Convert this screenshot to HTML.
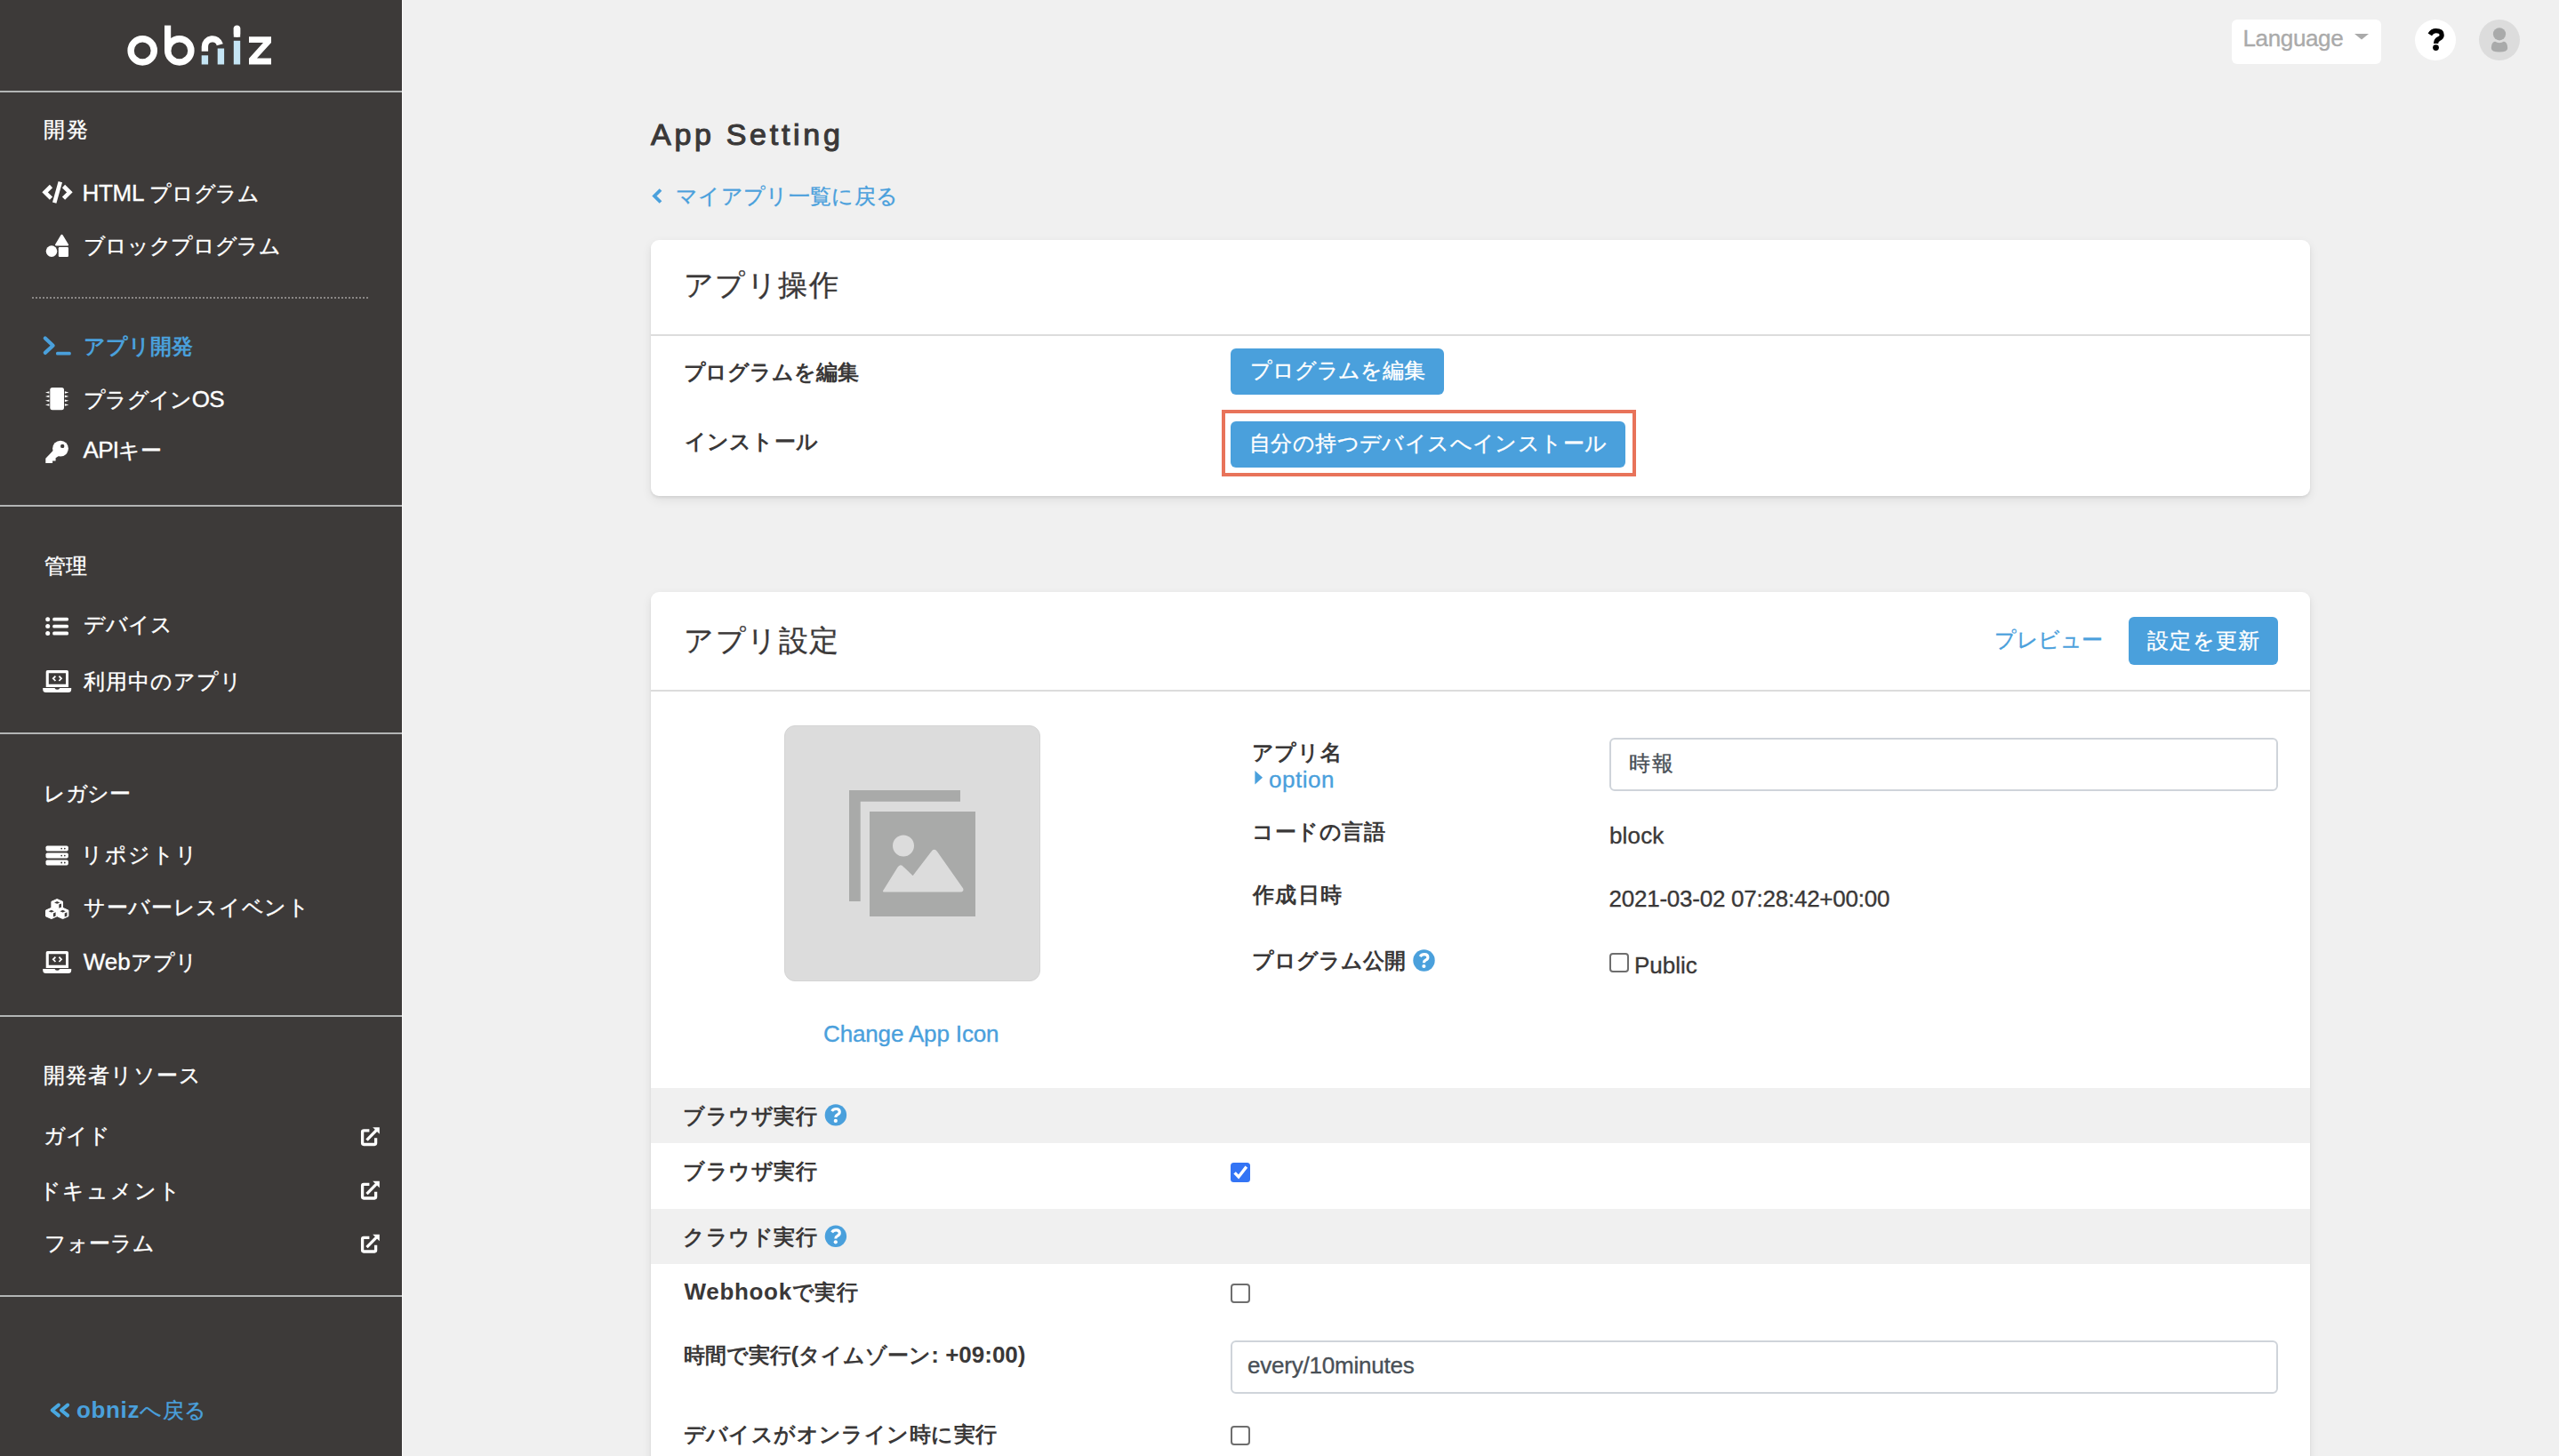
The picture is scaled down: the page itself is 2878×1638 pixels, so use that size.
<!DOCTYPE html>
<html lang="ja">
<head>
<meta charset="utf-8">
<style>
html,body{margin:0;padding:0;}
body{width:2878px;height:1638px;overflow:hidden;background:#f0f0f0;position:relative;font-family:"Liberation Sans",sans-serif;color:#3a3838;}
.a{position:absolute;}
.t{position:absolute;white-space:nowrap;height:40px;line-height:40px;font-size:26px;-webkit-text-stroke:0.35px currentColor;}
.t.b{-webkit-text-stroke:0;}
#sb{position:absolute;left:0;top:0;width:452px;height:1638px;background:#3d3a39;}
#sbedge{position:absolute;left:452px;top:0;width:1px;height:1638px;background:#fafafa;}
.hl{position:absolute;left:0;width:452px;height:2px;background:#b3b5b5;}
.sw{color:#fff;}
.blue{color:#4aa0dc;}
.b{font-weight:bold;}
.card{position:absolute;background:#fff;border-radius:9px;box-shadow:0 2px 3px rgba(0,0,0,0.07),0 4px 12px rgba(0,0,0,0.08);}
.div{position:absolute;left:0;right:0;height:2px;background:#dcdcdc;}
.btn{position:absolute;background:#4aa0dc;border-radius:6px;color:#fff;font-size:26px;text-align:center;white-space:nowrap;}
.help{position:absolute;width:24px;height:24px;border-radius:50%;background:#4aa0dc;color:#fff;font-weight:bold;font-size:19px;line-height:24px;text-align:center;}
.cb{position:absolute;width:18px;height:18px;border:2px solid #6e6e6e;border-radius:4px;background:#fff;}
.inp{position:absolute;background:#fff;border:2px solid #cfd4da;border-radius:6px;box-sizing:border-box;}
.j{font-size:24px;}
.gray{position:absolute;left:0;right:0;background:#f0f0f0;}
</style>
</head>
<body>
<div id="sb">
  <!-- logo -->
  <svg class="a" style="left:0;top:0" width="452" height="100" viewBox="0 0 452 100">
    <circle cx="160.2" cy="56.9" r="13.1" fill="none" stroke="#fff" stroke-width="7.4"/>
    <rect x="185" y="28.6" width="7.2" height="28.3" fill="#fff"/>
    <circle cx="201.8" cy="56.9" r="13.1" fill="none" stroke="#fff" stroke-width="7.4"/>
    <path d="M230.4 57.7 V52.4 A8.6 8.6 0 0 1 247.3 50.2" fill="none" stroke="#fff" stroke-width="7.4"/>
    <rect x="226.7" y="62.3" width="7.4" height="10.2" fill="#c5e5f5"/>
    <rect x="244.7" y="54.5" width="7.4" height="18" fill="#c5e5f5"/>
    <rect x="262.8" y="28.6" width="7.4" height="13.1" rx="3.7" fill="#fff"/>
    <rect x="262.8" y="31" width="7.4" height="10.7" fill="#fff"/>
    <rect x="262.8" y="45.8" width="7.4" height="26.7" fill="#c5e5f5"/>
    <path d="M280 41.3 H305 V48 L289 65.5 H305 V72.5 H280 V65.8 L296 48 H280 Z" fill="#fff"/>
  </svg>
</div>
<div id="sbedge"></div>
<div class="hl" style="top:102px"></div>
<div class="hl" style="top:568px"></div>
<div class="hl" style="top:824px"></div>
<div class="hl" style="top:1142px"></div>
<div class="hl" style="top:1457px"></div>
<div class="a" style="left:36px;top:334px;width:378px;height:0;border-top:2px dotted #8a8786;"></div>


<!-- sidebar icons -->
<svg class="a" style="left:0;top:0" width="452" height="1638" viewBox="0 0 452 1638">
  <g fill="none" stroke="#fff" stroke-width="4.6" stroke-linejoin="miter">
    <path d="M57.5 209.5 L50.6 216.3 L57.5 223.1"/>
    <path d="M71.5 209.5 L78.4 216.3 L71.5 223.1"/>
  </g>
  <path d="M65.6 204 L70 205.2 L63.4 228.8 L59 227.6 Z" fill="#fff"/>
  <path d="M69.5 263.8 Q70.2 263.8 70.8 264.8 L77 275 Q77.6 276.4 76 276.4 L63 276.4 Q61.5 276.4 62.1 275 L68.2 264.8 Q68.8 263.8 69.5 263.8 Z" fill="#fff"/>
  <circle cx="58" cy="282.6" r="6.3" fill="#fff"/>
  <rect x="65.8" y="278" width="11.2" height="11" rx="1.2" fill="#fff"/>
  <g fill="none" stroke="#4aa0dc" stroke-width="4.2" stroke-linecap="round" stroke-linejoin="round">
    <path d="M50.8 380.5 L59.6 388.7 L50.8 396.9"/>
  </g>
  <rect x="63" y="395.8" width="16.8" height="3.8" rx="1.5" fill="#4aa0dc"/>
  <rect x="56.3" y="436" width="15.7" height="25.2" rx="2.6" fill="#fff"/>
  <g fill="#fff">
    <path d="M55.4 440.2 V442.8 L51 441.5 Z"/><path d="M55.4 444.6 V447.2 L51 445.9 Z"/><path d="M55.4 449.5 V452.1 L51 450.8 Z"/><path d="M55.4 454.2 V456.8 L51 455.5 Z"/>
    <path d="M72.9 440.2 V442.8 L77.3 441.5 Z"/><path d="M72.9 444.6 V447.2 L77.3 445.9 Z"/><path d="M72.9 449.5 V452.1 L77.3 450.8 Z"/><path d="M72.9 454.2 V456.8 L77.3 455.5 Z"/>
  </g>
  <circle cx="68" cy="504.6" r="8.9" fill="#fff"/><path d="M59.6 507.1 L51.3 515.7 V521 H59.1 V518.4 H62.6 V515.3 L67.5 512 L64 509 Z" fill="#fff"/>
  <circle cx="70.2" cy="501.9" r="2.2" fill="#3d3a39"/>
  <g fill="#fff">
    <circle cx="53.7" cy="696.7" r="2.5"/><circle cx="53.7" cy="704.6" r="2.5"/><circle cx="53.7" cy="712.5" r="2.5"/>
    <rect x="59.2" y="694.8" width="17.8" height="3.8" rx="1.5"/><rect x="59.2" y="702.7" width="17.8" height="3.8" rx="1.5"/><rect x="59.2" y="710.6" width="17.8" height="3.8" rx="1.5"/>
  </g>
  <g id="laptop">
    <path d="M53.5 754 H75.2 Q77 754 77 755.8 V772.9 H51.7 V755.8 Q51.7 754 53.5 754 Z M54.8 757.2 V769.8 H74 V757.2 Z" fill="#fff" fill-rule="evenodd"/>
    <path d="M48.2 773.9 H61.5 Q62.5 775.8 64.4 775.8 Q66.3 775.8 67.3 773.9 H80.2 V775.5 Q80.2 779 76.7 779 H51.7 Q48.2 779 48.2 775.5 Z" fill="#fff"/>
    <path d="M62.4 760.6 L59.8 763.3 L62.4 766 M66.4 760.6 L69 763.3 L66.4 766" fill="none" stroke="#fff" stroke-width="1.8"/>
  </g>
  <use href="#laptop" x="0" y="316"/>
  <g fill="#fff">
    <rect x="51.5" y="951.5" width="25.3" height="6.1" rx="1.8"/>
    <rect x="51.5" y="959.5" width="25.3" height="6.1" rx="1.8"/>
    <rect x="51.5" y="967.4" width="25.3" height="6.1" rx="1.8"/>
  </g>
  <g fill="#3d3a39">
    <circle cx="69.2" cy="954.6" r="0.9"/><circle cx="72.8" cy="954.6" r="0.9"/>
    <circle cx="69.2" cy="962.6" r="0.9"/><circle cx="72.8" cy="962.6" r="0.9"/>
    <circle cx="69.2" cy="970.5" r="0.9"/><circle cx="72.8" cy="970.5" r="0.9"/>
  </g>
  <g fill="#fff" stroke="#fff" stroke-width="1" stroke-linejoin="round">
    <path d="M64.2 1011.5 L70.5 1014.3 V1021 L64.2 1023.8 L57.9 1021 V1014.3 Z"/>
    <path d="M57.8 1021.3 L64.1 1024.1 V1030.8 L57.8 1033.6 L51.5 1030.8 V1024.1 Z"/>
    <path d="M70.6 1021.3 L76.9 1024.1 V1030.8 L70.6 1033.6 L64.3 1030.8 V1024.1 Z"/>
  </g>
  <g fill="#3d3a39">
    <path d="M61 1015.4 L64.2 1014 L67.4 1015.4 L64.2 1016.8 Z"/>
    <path d="M54.6 1025.2 L57.8 1023.8 L61 1025.2 L57.8 1026.6 Z"/>
    <path d="M67.4 1025.2 L70.6 1023.8 L73.8 1025.2 L70.6 1026.6 Z"/>
    <path d="M66.3 1017.6 L69 1016.4 V1020.6 L66.3 1021.8 Z"/>
    <path d="M59.9 1027.4 L62.6 1026.2 V1030.4 L59.9 1031.6 Z"/>
    <path d="M72.7 1027.4 L75.4 1026.2 V1030.4 L72.7 1031.6 Z"/>
  </g>
  <g id="ext" fill="none" stroke="#fff" stroke-width="3.3">
    <path d="M415.4 1271.9 H409 Q407.6 1271.9 407.6 1273.3 V1286.1 Q407.6 1287.5 409 1287.5 H421.3 Q422.6 1287.5 422.6 1286.1 V1280.2"/>
    <path d="M412.5 1282.6 L423.5 1271.4"/>
  </g>
  <path d="M419.2 1268.2 H426.8 V1275.8 Z" fill="#fff"/>
  <use href="#ext" x="0" y="60.5"/>
  <path d="M419.2 1328.7 H426.8 V1336.3 Z" fill="#fff"/>
  <use href="#ext" x="0" y="120.5"/>
  <path d="M419.2 1388.7 H426.8 V1396.3 Z" fill="#fff"/>
  <g fill="none" stroke="#4aa8e0" stroke-width="4" stroke-linecap="round" stroke-linejoin="round">
    <path d="M65.9 1580.6 L58.7 1586.5 L65.9 1592.4"/>
    <path d="M76.1 1580.6 L68.9 1586.5 L76.1 1592.4"/>
  </g>
</svg>

<!-- sidebar texts -->
<div id="t1" class="t sw" style="font-size:24px;left:49.0px;top:126.0px;letter-spacing:2.00px;">開発</div>
<div id="t2" class="t sw" style="left:92.4px;top:196.5px;letter-spacing:-0.27px;">HTML <span class="j">プログラム</span></div>
<div id="t3" class="t sw" style="font-size:24px;left:93.5px;top:257.1px;letter-spacing:-0.31px;">ブロックプログラム</div>
<div id="t4" class="t blue b" style="font-size:24px;left:94.0px;top:369.5px;letter-spacing:0.00px;">アプリ開発</div>
<div id="t5" class="t sw" style="left:94.0px;top:428.5px;letter-spacing:-0.67px;"><span class="j">プラグイン</span>OS</div>
<div id="t6" class="t sw" style="left:93.6px;top:486.4px;letter-spacing:-0.75px;">API<span class="j">キー</span></div>
<div id="t7" class="t sw" style="font-size:24px;left:50.0px;top:616.5px;letter-spacing:0.00px;">管理</div>
<div id="t8" class="t sw" style="font-size:24px;left:94.0px;top:682.8px;letter-spacing:0.01px;">デバイス</div>
<div id="t9" class="t sw" style="font-size:24px;left:94.0px;top:747.0px;letter-spacing:1.01px;">利用中のアプリ</div>
<div id="t10" class="t sw" style="font-size:24px;left:49.0px;top:872.5px;letter-spacing:-0.33px;">レガシー</div>
<div id="t11" class="t sw" style="font-size:24px;left:91.0px;top:942.0px;letter-spacing:1.50px;">リポジトリ</div>
<div id="t12" class="t sw" style="font-size:24px;left:94.0px;top:1000.5px;letter-spacing:0.67px;">サーバーレスイベント</div>
<div id="t13" class="t sw" style="left:93.8px;top:1062.0px;letter-spacing:0.00px;">Web<span class="j">アプリ</span></div>
<div id="t14" class="t sw" style="font-size:24px;left:48.5px;top:1190.0px;letter-spacing:1.01px;">開発者リソース</div>
<div id="t15" class="t sw" style="font-size:24px;left:49.0px;top:1257.5px;letter-spacing:0.00px;">ガイド</div>
<div id="t16" class="t sw" style="font-size:24px;left:43.5px;top:1319.5px;letter-spacing:1.90px;">ドキュメント</div>
<div id="t17" class="t sw" style="font-size:24px;left:49.5px;top:1379.0px;letter-spacing:-0.00px;">フォーラム</div>
<div id="t18" class="t blue" style="left:86.0px;top:1566.0px;letter-spacing:0.65px;"><b style="-webkit-text-stroke:0">obniz</b><span class="j">へ戻る</span></div>

<!-- header -->
<div class="a" style="left:2510px;top:22px;width:168px;height:50px;background:#fff;border-radius:6px;"></div>
<div id="t19" class="t" style="left:2522.5px;top:22.5px;color:#aaa;letter-spacing:-0.36px;">Language</div>

<!-- title -->
<div id="t46" class="t" style="-webkit-text-stroke:1.1px currentColor;left:732.0px;top:126.0px;font-size:34px;height:50px;line-height:50px;letter-spacing:3.70px;">App Setting</div>
<div id="t20" class="t blue" style="font-size:24px;left:760.0px;top:201.0px;letter-spacing:0.33px;">マイアプリ一覧に戻る</div>

<!-- card 1 -->
<div class="card" style="left:732px;top:270px;width:1866px;height:288px;">
  <div class="div" style="top:106px"></div>
</div>
<div id="t21" class="t" style="left:769.0px;top:295.5px;font-size:33px;height:50px;line-height:50px;letter-spacing:1.38px;">アプリ操作</div>
<div id="t22" class="t b" style="font-size:24px;left:768.5px;top:398.5px;letter-spacing:-0.07px;">プログラムを編集</div>
<div class="btn" style="left:1384px;top:392px;width:240px;height:52px;"></div>
<div id="t23" class="t sw" style="font-size:24px;left:1406.0px;top:397.1px;letter-spacing:-0.14px;">プログラムを編集</div>
<div id="t24" class="t b" style="font-size:24px;left:769.5px;top:477.0px;letter-spacing:0.30px;">インストール</div>
<div class="a" style="left:1374px;top:461px;width:458px;height:67px;border:4.5px solid #e8735a;"></div>
<div class="btn" style="left:1384px;top:474px;width:444px;height:52px;"></div>
<div id="t25" class="t sw" style="font-size:24px;left:1405.0px;top:479.1px;letter-spacing:0.40px;">自分の持つデバイスへインストール</div>

<!-- card 2 -->
<div class="card" style="left:732px;top:666px;width:1866px;height:1100px;">
  <div class="div" style="top:110px"></div>
  <div class="gray" style="top:558px;height:62px"></div>
  <div class="gray" style="top:694px;height:62px"></div>
</div>
<div id="t26" class="t" style="left:769.0px;top:696.0px;font-size:33px;height:50px;line-height:50px;letter-spacing:1.50px;">アプリ設定</div>
<div id="t27" class="t blue" style="font-size:24px;left:2243.0px;top:700.0px;letter-spacing:-0.50px;">プレビュー</div>
<div class="btn" style="left:2394px;top:694px;width:168px;height:54px;"></div>
<div id="t28" class="t sw" style="font-size:24px;left:2415.0px;top:700.5px;letter-spacing:1.25px;">設定を更新</div>

<div class="a" style="left:882px;top:816px;width:286px;height:286px;background:#dcdcdc;border:1px solid #d4d4d4;border-radius:12px;"></div>
<div id="t29" class="t blue" style="left:926.0px;top:1143.0px;letter-spacing:-0.14px;">Change App Icon</div>

<div id="t30" class="t b" style="font-size:24px;left:1407.6px;top:834.0px;height:26px;line-height:26px;letter-spacing:0.86px;">アプリ名</div>
<div id="t31" class="t blue" style="left:1427.0px;top:863.5px;height:26px;line-height:26px;letter-spacing:0.50px;">option</div>
<div id="t32" class="t b" style="font-size:24px;left:1408.0px;top:915.5px;letter-spacing:0.60px;">コードの言語</div>
<div id="t33" class="t b" style="font-size:24px;left:1409.0px;top:987.0px;letter-spacing:1.34px;">作成日時</div>
<div id="t34" class="t b" style="font-size:24px;left:1408.0px;top:1061.0px;letter-spacing:0.00px;">プログラム公開</div>

<div class="inp" style="left:1810px;top:830px;width:752px;height:60px;"></div>
<div id="t35" class="t" style="font-size:24px;left:1831.5px;top:839.0px;color:#495057;letter-spacing:2.50px;">時報</div>
<div id="t36" class="t" style="left:1810.0px;top:919.5px;letter-spacing:0.15px;">block</div>
<div id="t37" class="t" style="left:1809.5px;top:990.5px;letter-spacing:-0.24px;">2021-03-02 07:28:42+00:00</div>
<div class="cb" style="left:1810px;top:1072px"></div>
<div id="t38" class="t" style="left:1838.0px;top:1065.5px;letter-spacing:0.00px;">Public</div>

<div id="t39" class="t b" style="font-size:24px;left:768.0px;top:1235.5px;letter-spacing:0.60px;">ブラウザ実行</div>
<div id="t40" class="t b" style="font-size:24px;left:768.0px;top:1297.5px;letter-spacing:0.60px;">ブラウザ実行</div>
<div id="t41" class="t b" style="font-size:24px;left:768.0px;top:1371.5px;letter-spacing:0.60px;">クラウド実行</div>
<div id="t42" class="t b" style="left:769.6px;top:1433.2px;letter-spacing:0.67px;">Webhook<span class="j">で実行</span></div>
<div class="cb" style="left:1384px;top:1444px"></div>
<div id="t43" class="t b" style="left:768.6px;top:1504.0px;letter-spacing:0.00px;"><span class="j">時間で実行</span>(<span class="j">タイムゾーン</span>: +09:00)</div>
<div class="inp" style="left:1384px;top:1508px;width:1178px;height:60px;"></div>
<div id="t44" class="t" style="left:1403.0px;top:1516.0px;color:#495057;letter-spacing:-0.21px;">every/10minutes</div>
<div id="t45" class="t b" style="font-size:24px;left:768.5px;top:1593.5px;letter-spacing:0.42px;">デバイスがオンライン時に実行</div>
<div class="cb" style="left:1384px;top:1604px"></div>

<!-- main icons -->
<svg class="a" style="left:0;top:0" width="2878" height="1638" viewBox="0 0 2878 1638">
  <path d="M2648 38 H2664 L2656 44.5 Z" fill="#aaa"/>
  <circle cx="2739" cy="45" r="23" fill="#fff"/>
  <path d="M2732.8 38.8 Q2735.4 34.7 2739.6 34.7 Q2746.2 34.7 2746.2 39.5 Q2746.2 42.1 2742.9 43.7 Q2739.6 45.3 2739.6 48.9" fill="none" stroke="#000" stroke-width="5.2"/>
  <circle cx="2739.5" cy="53.6" r="3.4" fill="#000"/>
  <circle cx="2811" cy="45" r="23" fill="#dcdcdc"/>
  <circle cx="2811" cy="38.3" r="7.1" fill="#a9aaaa"/>
  <path d="M2802.2 51 Q2803 47 2806.4 46.8 Q2808 48.2 2811 48.2 Q2814 48.2 2815.6 46.8 Q2819 47 2819.8 51 L2820.2 54 Q2820.2 58.6 2811 58.6 Q2801.8 58.6 2801.8 54 Z" fill="#a9aaaa"/>
  <path d="M743 213.5 L736 220.5 L743 227.5" fill="none" stroke="#4aa0dc" stroke-width="3.8" stroke-linejoin="miter"/>
  <path d="M955 889 H1080 V901.7 H967.7 V1014 H955 Z" fill="#a9aaa9"/>
  <rect x="978" y="913" width="119" height="118" fill="#a9aaa9"/>
  <circle cx="1016" cy="951.6" r="12" fill="#dcdcdc"/>
  <path d="M994 1002.6 L1010.5 976 Q1012.8 972.5 1015.2 975.6 L1026.8 986.7 L1048.2 958.6 Q1050.7 955 1053.2 958.6 L1082 999.5 Q1083.5 1002.6 1080 1002.6 Z" fill="#dcdcdc" stroke="#dcdcdc" stroke-width="2" stroke-linejoin="round"/>
  <circle cx="1601.5" cy="1080.5" r="12.2" fill="#4aa0dc"/><path d="M1597.2 1076.1 Q1598.7 1073.6 1601.9 1073.6 Q1605.9 1073.6 1605.9 1076.9 Q1605.9 1078.9 1603.3 1080.2 Q1601.4 1081.3 1601.4 1083.2" fill="none" stroke="#fff" stroke-width="3.1"/><circle cx="1601.4" cy="1087.0" r="2.1" fill="#fff"/>
<circle cx="939.9" cy="1254.4" r="12.2" fill="#4aa0dc"/><path d="M935.6 1250.0 Q937.1 1247.5 940.3 1247.5 Q944.3 1247.5 944.3 1250.8000000000002 Q944.3 1252.8000000000002 941.6999999999999 1254.1000000000001 Q939.8 1255.2 939.8 1257.1000000000001" fill="none" stroke="#fff" stroke-width="3.1"/><circle cx="939.8" cy="1260.9" r="2.1" fill="#fff"/>
<circle cx="939.9" cy="1390.8" r="12.2" fill="#4aa0dc"/><path d="M935.6 1386.3999999999999 Q937.1 1383.8999999999999 940.3 1383.8999999999999 Q944.3 1383.8999999999999 944.3 1387.2 Q944.3 1389.2 941.6999999999999 1390.5 Q939.8 1391.6 939.8 1393.5" fill="none" stroke="#fff" stroke-width="3.1"/><circle cx="939.8" cy="1397.3" r="2.1" fill="#fff"/>
  <path d="M1411.4 867 L1420 874.7 L1411.4 882.4 Z" fill="#4aa0dc"/>
  <rect x="1384" y="1308" width="22" height="22" rx="3.5" fill="#3374f5"/>
  <path d="M1388.6 1319.4 L1393 1324 L1401.8 1312.6" fill="none" stroke="#fff" stroke-width="3.4" stroke-linecap="butt" stroke-linejoin="miter"/>
</svg>
</body>
</html>
